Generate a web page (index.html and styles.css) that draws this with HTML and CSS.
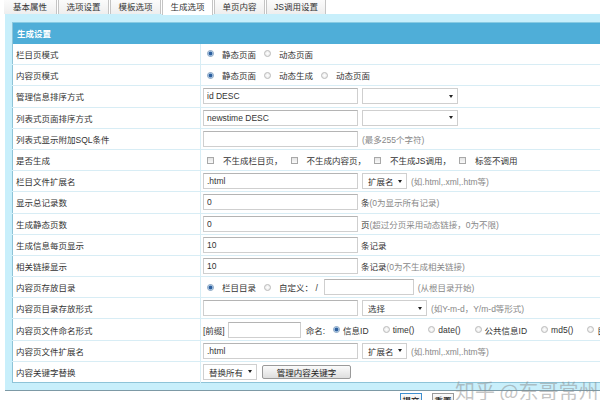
FILE: index.html
```html
<!DOCTYPE html>
<html lang="zh-CN">
<head>
<meta charset="utf-8">
<title>生成选项</title>
<link rel="stylesheet" href="styles.css">
</head>
<body>
<div class="tabs">
  <span class="tab t1">基本属性</span>
  <span class="tab">选项设置</span>
  <span class="tab">模板选项</span>
  <span class="tab active">生成选项</span>
  <span class="tab">单页内容</span>
  <span class="tab wide">JS调用设置</span>
</div>
<div class="panel">
  <table class="form">
    <thead>
      <tr><th colspan="2">生成设置</th></tr>
    </thead>
    <tbody>
      <tr><td class="lbl">栏目页模式</td>
        <td><div class="cell"><input type="radio" class="rd" name="a" checked><span class="opt">静态页面</span><input type="radio" class="rd" name="a"><span class="opt">动态页面</span></div></td></tr>
      <tr><td class="lbl">内容页模式</td>
        <td><div class="cell"><input type="radio" class="rd" name="b" checked><span class="opt">静态页面</span><input type="radio" class="rd" name="b"><span class="opt">动态生成</span><input type="radio" class="rd" name="b"><span class="opt">动态页面</span></div></td></tr>
      <tr><td class="lbl">管理信息排序方式</td>
        <td><div class="cell"><input class="txt" value="id DESC"><span class="sel w96"><span></span><i class="arr"></i></span></div></td></tr>
      <tr><td class="lbl">列表式页面排序方式</td>
        <td><div class="cell"><input class="txt" value="newstime DESC"><span class="sel w96"><span></span><i class="arr"></i></span></div></td></tr>
      <tr><td class="lbl">列表式显示附加SQL条件</td>
        <td><div class="cell"><input class="txt" value=""><span class="hint gap4">(最多255个字符)</span></div></td></tr>
      <tr><td class="lbl">是否生成</td>
        <td><div class="cell"><input type="checkbox" class="ck"><span class="opt">不生成栏目页，</span><input type="checkbox" class="ck"><span class="opt">不生成内容页，</span><input type="checkbox" class="ck"><span class="opt">不生成JS调用，</span><input type="checkbox" class="ck"><span class="opt">标签不调用</span></div></td></tr>
      <tr><td class="lbl">栏目文件扩展名</td>
        <td><div class="cell"><input class="txt" value=".html"><span class="sel w45"><span>扩展名</span><i class="arr"></i></span><span class="hint gap4">(如.html,.xml,.htm等)</span></div></td></tr>
      <tr><td class="lbl">显示总记录数</td>
        <td><div class="cell"><input class="txt" value="0"><span class="after">条<span class="hint">(0为显示所有记录)</span></span></div></td></tr>
      <tr><td class="lbl">生成静态页数</td>
        <td><div class="cell"><input class="txt" value="0"><span class="after">页<span class="hint">(超过分页采用动态链接，0为不限)</span></span></div></td></tr>
      <tr><td class="lbl">生成信息每页显示</td>
        <td><div class="cell"><input class="txt" value="10"><span class="after">条记录</span></div></td></tr>
      <tr><td class="lbl">相关链接显示</td>
        <td><div class="cell"><input class="txt" value="10"><span class="after">条记录<span class="hint">(0为不生成相关链接)</span></span></div></td></tr>
      <tr><td class="lbl">内容页存放目录</td>
        <td><div class="cell"><input type="radio" class="rd" name="c" checked><span class="opt">栏目目录</span><input type="radio" class="rd" name="c"><span class="slash">自定义：&nbsp;/</span><input class="txt w90" value=""><span class="hint gap4">(从根目录开始)</span></div></td></tr>
      <tr><td class="lbl">内容页目录存放形式</td>
        <td><div class="cell"><input class="txt" value=""><span class="sel w65"><span>选择</span><i class="arr"></i></span><span class="hint gap4">(如Y-m-d，Y/m-d等形式)</span></div></td></tr>
      <tr><td class="lbl">内容页文件命名形式</td>
        <td><div class="cell tight"><span class="pre">[前缀]</span><input class="txt w73" value=""><span class="name">命名:</span><input type="radio" class="rd" name="d" checked><span class="opt">信息ID</span><input type="radio" class="rd" name="d"><span class="opt">time()</span><input type="radio" class="rd" name="d"><span class="opt">date()</span><input type="radio" class="rd" name="d"><span class="opt">公共信息ID</span><input type="radio" class="rd" name="d"><span class="opt">md5()</span><input type="radio" class="rd" name="d"><span class="opt">目录</span></div></td></tr>
      <tr><td class="lbl">内容页文件扩展名</td>
        <td><div class="cell"><input class="txt" value=".html"><span class="sel w45"><span>扩展名</span><i class="arr"></i></span><span class="hint gap4">(如.html,.xml,.htm等)</span></div></td></tr>
      <tr><td class="lbl">内容关键字替换</td>
        <td><div class="cell"><span class="sel w54 first"><span>替换所有</span><i class="arr"></i></span><button class="btn" type="button">管理内容关键字</button></div></td></tr>
    </tbody>
  </table>
</div>
<div class="actions">
  <button class="sbtn primary" type="button">提交</button>
  <button class="sbtn" type="button">重置</button>
</div>
<div class="watermark">知乎 @东哥常州</div>
</body>
</html>
```

FILE: styles.css
```css
* { box-sizing: border-box; }
html, body { margin: 0; padding: 0; background: #fff; }
body {
  width: 600px;
  height: 400px;
  overflow: hidden;
  position: relative;
  font-family: "Liberation Sans", "Noto Sans CJK SC", sans-serif;
  font-size: 8.5px;
  color: #333;
}

/* tabs */
.tabs { display: flex; height: 14px; padding-left: 4px; gap: 1px; }
.tab {
  width: 51px;
  height: 14px;
  display: flex;
  align-items: center;
  justify-content: center;
  background: linear-gradient(#fbfbfb, #eeeeee);
  border-left: 1px solid #c4c4c4;
  border-right: 1px solid #c4c4c4;
  color: #333;
  line-height: 1;
}
.tab.t1 { width: 53px; border-left: none; }
.tab.wide { width: 60px; }
.tab.active { background: #fff; height: 15px; position: relative; z-index: 1; }

/* panel */
.panel {
  margin-left: 5px;
  width: 700px;
  background: #c8effb;
  padding: 8px 0 7px 7px;
  border-bottom: 1px solid #7d9aa6;
}
.form {
  width: 690px;
  border-collapse: collapse;
  background: #fff;
  border-left: 1px solid #8ec4d8;
  border-bottom: 1px solid #8ec4d8;
}
.form th {
  background: #4faed8;
  color: #fff;
  font-weight: bold;
  text-align: left;
  height: 21px;
  padding: 0 0 0 4px;
  border-top: 1px solid #88cbe3;
  font-size: 8.5px;
}
.form td {
  height: 21.2px;
  padding: 0;
  border-bottom: 1px solid #d8edf5;
  vertical-align: middle;
}
.form tbody tr:last-child td { border-bottom: none; }
.form td.lbl {
  width: 188px;
  padding-left: 3px;
  border-right: 1px solid #d8edf5;
  color: #333;
}
.cell {
  display: flex;
  align-items: center;
  padding-left: 2px;
  white-space: nowrap;
}

/* controls */
.txt {
  width: 155px;
  height: 16px;
  margin: 0;
  padding: 0 3px;
  border: 1px solid #cfcfcf;
  border-top-color: #b4b4b4;
  font: inherit;
  color: #333;
  background: #fff;
  outline: none;
}
.w90 { width: 90px; margin-left: 6px; }
.w73 { width: 73px; margin-left: 3px; }
.sel {
  display: inline-flex;
  align-items: center;
  justify-content: space-between;
  height: 16px;
  margin-left: 4px;
  padding: 0 4px 0 5px;
  border: 1px solid #cfcfcf;
  background: #fff;
  color: #333;
}
.sel.first { margin-left: 0; }
.w96 { width: 96px; }
.w45 { width: 45px; }
.w65 { width: 65px; }
.w54 { width: 54px; }
.arr {
  width: 0;
  height: 0;
  border-left: 2.5px solid transparent;
  border-right: 2.5px solid transparent;
  border-top: 3px solid #222;
  margin-left: 3px;
}
.rd {
  -webkit-appearance: none;
  appearance: none;
  width: 7px;
  height: 7px;
  margin: 0 8px 0 4px;
  border-radius: 50%;
  border: 1px solid #bcbcbc;
  background: radial-gradient(circle, #ffffff 0, #e4e4e4 100%);
  flex: none;
}
.rd:checked {
  border-color: #90a9c4;
  background: radial-gradient(circle, #2d5f9e 0, #2d5f9e 1.4px, #a9c8e6 2.2px, #eef4fa 3.5px);
}
.ck {
  -webkit-appearance: none;
  appearance: none;
  width: 7px;
  height: 7px;
  margin: 0 9px 0 4px;
  border: 1px solid #a8a8a8;
  background: linear-gradient(#e4e4e4, #fafafa);
  flex: none;
}
.opt { margin-right: 3px; }
.cell .opt + .rd, .cell .opt + .ck { margin-left: 5px; }
.tight .rd { margin: 0 3px 0 0; }
.tight .opt { margin-right: 9px; }
.tight .opt:last-child { margin-right: 0; }
.pre { margin-right: 0; }
.name { margin: 0 8px 0 5px; }
.slash { margin-left: 0; }
.hint { color: #888; }
.gap4 { margin-left: 4px; }
.after { margin-left: 3px; color: #333; }
.btn {
  margin-left: 5px;
  height: 14px;
  width: 89px;
  padding: 0;
  font: inherit;
  color: #222;
  border: 1px solid #9a9a9a;
  border-radius: 2px;
  background: linear-gradient(#fbfbfb, #dedede);
}

/* bottom actions */
.actions {
  display: flex;
  gap: 10px;
  padding: 2px 0 0 400px;
}
.sbtn {
  width: 22px;
  height: 14px;
  padding: 0;
  font: inherit;
  border: 1px solid #9a9a9a;
  background: linear-gradient(#fbfbfb, #dedede);
}
.sbtn.primary { border-color: #3d8fd0; }
.watermark {
  position: absolute;
  left: 455px;
  top: 379px;
  font-family: "Noto Sans CJK SC", sans-serif;
  font-size: 20px;
  line-height: 1.2;
  color: rgba(140, 140, 140, 0.5);
  white-space: nowrap;
}
```
